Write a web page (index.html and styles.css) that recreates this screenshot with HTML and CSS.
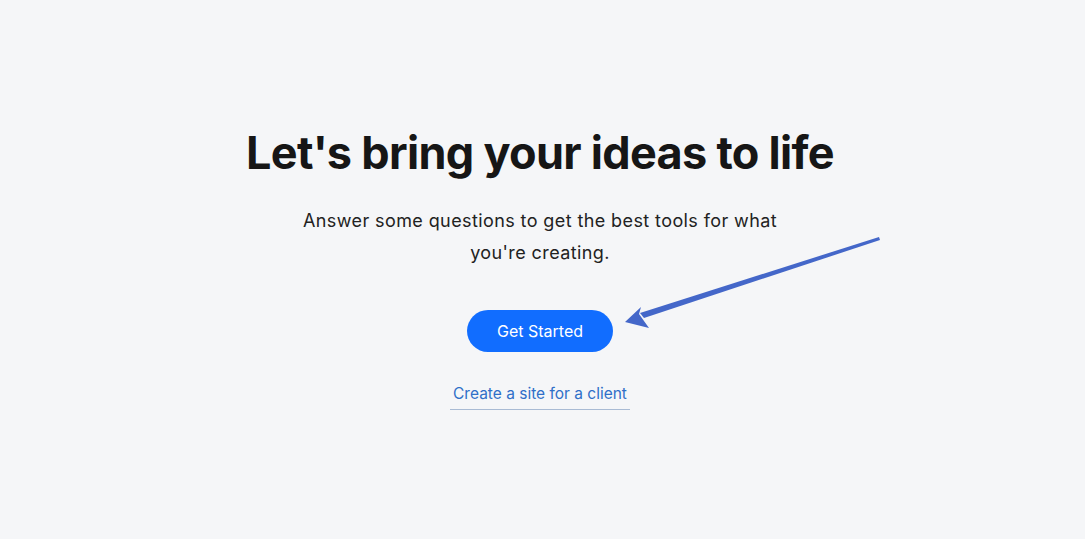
FILE: index.html
```html
<!DOCTYPE html>
<html lang="en">
<head>
<meta charset="utf-8">
<title>Let's bring your ideas to life</title>
<link rel="stylesheet" href="styles.css">
</head>
<body>
<main class="page">
  <section class="hero">
    <h1 class="title">Let's bring your ideas to life</h1>
    <p class="subtitle">Answer some questions to get the best tools for what<br>you're creating.</p>
    <button class="cta" type="button">Get Started</button>
    <a class="client-link" href="#">Create a site for a client</a>
  </section>
  <svg class="annotation" width="1085" height="539" viewBox="0 0 1085 539" aria-hidden="true">
    <polygon points="879,237 880,240 644,318 640,313" fill="#4467c9"/>
    <polygon points="625,322 641,307 639,314 649,328" fill="#4467c9"/>
  </svg>
</main>
</body>
</html>
```
FILE: styles.css
```css
html, body {
  margin: 0;
  padding: 0;
  background: #f5f6f8;
}
body {
  font-family: Inter, "Noto Sans", "Liberation Sans", sans-serif;
  color: #1c1c1c;
}
.page {
  position: relative;
  width: 1085px;
  height: 539px;
  overflow: hidden;
}
.hero {
  display: flex;
  flex-direction: column;
  align-items: center;
  padding-top: 126px;
  padding-right: 5px;
}
.title {
  margin: 0;
  font-size: 45px;
  line-height: 54px;
  font-weight: 700;
  letter-spacing: -0.7px;
  color: #161616;
}
.subtitle {
  margin: 25px 0 0;
  font-size: 18px;
  line-height: 32px;
  letter-spacing: 0.4px;
  text-align: center;
  color: #222;
}
.cta {
  margin-top: 41px;
  width: 146px;
  height: 42px;
  border: none;
  border-radius: 21px;
  background: #116dff;
  color: #fff;
  font-family: inherit;
  font-size: 16px;
  cursor: pointer;
}
.client-link {
  margin-top: 31px;
  padding: 0 3px 4px;
  font-size: 15.5px;
  line-height: 22px;
  color: #2f6fc8;
  text-decoration: none;
  border-bottom: 1px solid #a9bbd4;
}
.annotation {
  position: absolute;
  left: 0;
  top: 0;
}
```
